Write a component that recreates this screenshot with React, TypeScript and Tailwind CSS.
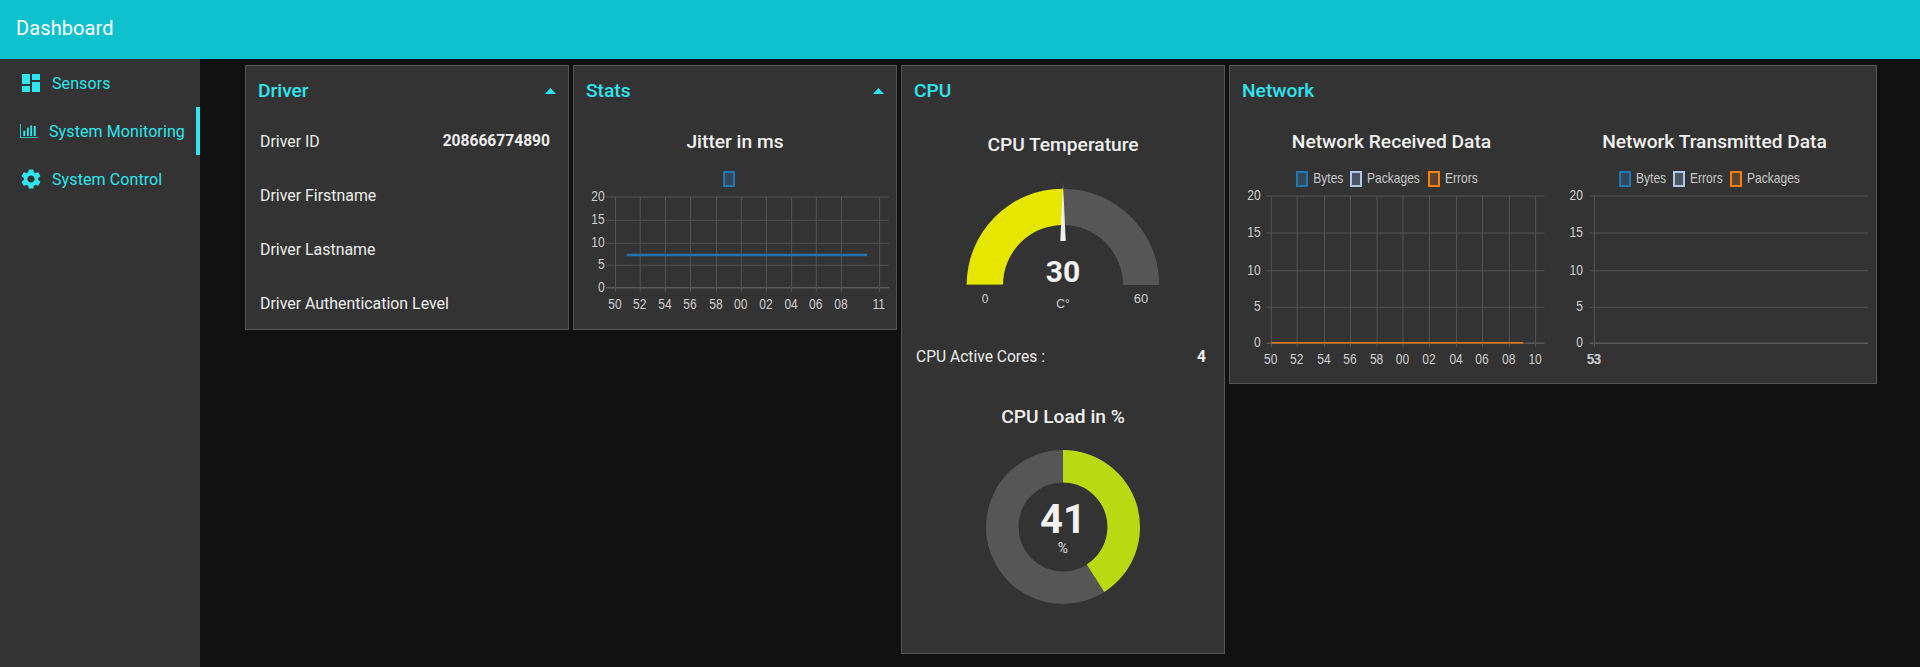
import React from 'react';
import { MdDashboard, MdSettings } from 'react-icons/md';

const tickFont = '"Liberation Sans", Arial, sans-serif';

interface LegendItem {
  x: number;
  label: string;
  labelX: number;
  color: string;
  fill: string;
}

interface LineChartProps {
  height: number;
  yTicks: { label: string; y: number }[];
  labelRight: number;
  gridLeft: number;
  gridRight: number;
  vLines: number[];
  xTicks: { label: string; x: number }[];
  xLabelY: number;
  legend: LegendItem[];
  line?: { x1: number; x2: number; y: number; color: string; width: number };
}

function Tick({ x, y, anchor, children }: { x: number; y: number; anchor: 'middle' | 'end'; children: string }) {
  return (
    <text
      transform={`translate(${x} ${y}) scale(0.86 1)`}
      textAnchor={anchor}
      fontSize={14}
      fill="#cfcfcf"
      fontFamily={tickFont}
    >
      {children}
    </text>
  );
}

function LineChart({ height, yTicks, labelRight, gridLeft, gridRight, vLines, xTicks, xLabelY, legend, line }: LineChartProps) {
  const top = yTicks[0].y;
  const bottom = yTicks[yTicks.length - 1].y;
  return (
    <svg width={322} height={height} className="block">
      {yTicks.map((t, i) => (
        <line
          key={t.label}
          x1={gridLeft}
          x2={gridRight}
          y1={t.y}
          y2={t.y}
          stroke={i === yTicks.length - 1 ? '#5a5a5a' : '#4a4a4a'}
          strokeWidth={i === yTicks.length - 1 ? 1.6 : 1.3}
        />
      ))}
      {vLines.map(x => (
        <line key={x} x1={x} x2={x} y1={top} y2={bottom + 4} stroke="#545454" strokeWidth={1} />
      ))}
      {yTicks.map(t => (
        <Tick key={t.label} x={labelRight} y={t.y + 4} anchor="end">
          {t.label}
        </Tick>
      ))}
      {xTicks.map(t => (
        <Tick key={t.label + t.x} x={t.x} y={xLabelY} anchor="middle">
          {t.label}
        </Tick>
      ))}
      {legend.map(l => (
        <g key={l.label || 'series'}>
          <rect x={Math.round(l.x) + 1} y={2} width={10} height={14} fill={l.fill} stroke={l.color} strokeWidth={2} />
          {l.label && (
            <text
              transform={`translate(${l.labelX} 12.5) scale(0.86 1)`}
              fontSize={14}
              fill="#c8c8c8"
              fontFamily={tickFont}
            >
              {l.label}
            </text>
          )}
        </g>
      ))}
      {line && <line x1={line.x1} x2={line.x2} y1={line.y} y2={line.y} stroke={line.color} strokeWidth={line.width} />}
    </svg>
  );
}

function BarsIcon() {
  return (
    <svg width={18} height={14} viewBox="0 0 18 14" fill="#2fe5ef" className="shrink-0">
      <rect x={0} y={0} width={0.8} height={14} />
      <rect x={0} y={13.2} width={18} height={0.8} />
      <rect x={3.3} y={6.7} width={2} height={5.3} />
      <rect x={7} y={3.7} width={1.8} height={8.3} />
      <rect x={10.3} y={1.5} width={1.8} height={10.5} />
      <rect x={13.7} y={2} width={2} height={10} />
    </svg>
  );
}

function Caret() {
  return (
    <svg width={11} height={6} viewBox="0 0 11 6" fill="#2fe5ef">
      <path d="M0 6 5.5 0 11 6z" />
    </svg>
  );
}

function CardTitle({ title, collapsible }: { title: string; collapsible?: boolean }) {
  return (
    <div className="h-[48px] pt-[2px] pl-3 pr-[12px] flex items-center justify-between">
      <span className="text-[19.2px] font-medium text-[#2fe5ef]">{title}</span>
      {collapsible && <Caret />}
    </div>
  );
}

function Gauge() {
  const cx = 161;
  const by = 111;
  const R = 96.3;
  const r = 60;
  return (
    <svg width={322} height={156} className="block">
      <defs>
        <linearGradient id="needle" x1="0" x2="0" y1="0" y2="1">
          <stop offset="0" stopColor="#ffffff" stopOpacity="0.15" />
          <stop offset="0.25" stopColor="#ffffff" stopOpacity="0.8" />
          <stop offset="1" stopColor="#f4f4f4" />
        </linearGradient>
      </defs>
      <path
        d={`M${cx - R} ${by} A${R} ${R} 0 0 1 ${cx + R} ${by} L${cx + r} ${by} A${r} ${r} 0 0 0 ${cx - r} ${by} Z`}
        fill="#565656"
      />
      <path d={`M${cx - R} ${by} A${R} ${R} 0 0 1 ${cx} ${by - R} L${cx} ${by - r} A${r} ${r} 0 0 0 ${cx - r} ${by} Z`} fill="#e6e600" />
      <line x1={cx - R} x2={cx - r} y1={by - 0.5} y2={by - 0.5} stroke="#a3a310" strokeWidth={1} />
      <path d={`M${cx} ${by - 103.5} L${cx + 2.7} ${by - 44} L${cx - 2.7} ${by - 44} Z`} fill="url(#needle)" />
      <text x={cx} y={by - 3} textAnchor="middle" fontSize={30} fontWeight={700} fill="#f2f2f2" fontFamily="Roboto, sans-serif">
        30
      </text>
      <text x={83} y={129} textAnchor="middle" fontSize={12} fill="#cfcfcf" fontFamily={tickFont}>
        0
      </text>
      <text x={239} y={129} textAnchor="middle" fontSize={13} fill="#cfcfcf" fontFamily={tickFont}>
        60
      </text>
      <text x={cx} y={133.5} textAnchor="middle" fontSize={12} fill="#cfcfcf" fontFamily={tickFont}>
        C°
      </text>
    </svg>
  );
}

function Donut() {
  const cx = 161;
  const cy = 79;
  const R = 77;
  const r = 44.5;
  const a = (0.41 * 2 * Math.PI);
  const sx = Math.sin(a);
  const cy2 = -Math.cos(a);
  return (
    <svg width={322} height={162} className="block">
      <circle cx={cx} cy={cy} r={(R + r) / 2} fill="none" stroke="#565656" strokeWidth={R - r} />
      <path
        d={`M${cx} ${cy - R} A${R} ${R} 0 0 1 ${cx + R * sx} ${cy + R * cy2} L${cx + r * sx} ${cy + r * cy2} A${r} ${r} 0 0 0 ${cx} ${cy - r} Z`}
        fill="#b9d913"
      />
      <text x={cx} y={cy + 6} textAnchor="middle" fontSize={40} fontWeight={700} fill="#f2f2f2" fontFamily="Roboto, sans-serif">
        41
      </text>
      <text x={cx} y={cy + 26} textAnchor="middle" fontSize={14} fill="#dcdcdc" fontFamily="Roboto, sans-serif">
        %
      </text>
    </svg>
  );
}

const navItems = [
  { label: 'Sensors', icon: <MdDashboard size={24} className="shrink-0" />, cls: 'pl-[19px] gap-[9px]' },
  { label: 'System Monitoring', icon: <BarsIcon />, cls: 'pl-5 gap-[11px] border-r-4 border-[#2fe5ef]' },
  { label: 'System Control', icon: <MdSettings size={24} className="shrink-0" />, cls: 'pl-[19px] gap-[9px]' },
];

const driverRows = [
  { label: 'Driver ID', value: '208666774890' },
  { label: 'Driver Firstname', value: '' },
  { label: 'Driver Lastname', value: '' },
  { label: 'Driver Authentication Level', value: '' },
];

const seconds = ['50', '52', '54', '56', '58', '00', '02', '04', '06', '08'];

const jitterX = [41.5, 66.2, 91.4, 116.5, 142.5, 167.3, 192.4, 217.6, 242.3, 267.4, 305.6];
const netX = [41.3, 67.2, 94.5, 120.4, 147.1, 173, 199.4, 226.6, 252.5, 279.3, 305.6];
const netY = [
  { label: '20', y: 26 },
  { label: '15', y: 63 },
  { label: '10', y: 100.7 },
  { label: '5', y: 137.3 },
  { label: '0', y: 173.3 },
];

export default function App() {
  return (
    <div className="h-screen flex flex-col bg-[#111111] overflow-hidden" style={{ fontFamily: 'Roboto, sans-serif' }}>
      <header className="h-[59px] shrink-0 bg-[#0fc1cd] flex items-center pl-[16px] pb-[3px] text-white text-[20px] tracking-[0.1px]">
        Dashboard
      </header>
      <div className="flex flex-1 min-h-0">
        <nav className="w-[200px] shrink-0 bg-[#333333]">
          {navItems.map(item => (
            <div key={item.label} className={`h-[48px] flex items-center text-[16px] tracking-[0.1px] text-[#2fe5ef] ${item.cls}`}>
              {item.icon}
              <span className="mt-[2px]">{item.label}</span>
            </div>
          ))}
        </nav>

        <main className="flex-1 pl-[45px] pt-[6px] flex items-start gap-[4px]">
          <section className="w-[324px] h-[265px] border border-[#555555] bg-[#333333]">
            <CardTitle title="Driver" collapsible />
            {driverRows.map(row => (
              <div key={row.label} className="h-[54px] pt-[2px] pl-[14px] pr-[18px] flex items-center justify-between text-[15.9px] text-[#ececec]">
                <span>{row.label}</span>
                {row.value && <span className="font-bold text-[15.6px]">{row.value}</span>}
              </div>
            ))}
          </section>

          <section className="w-[324px] h-[265px] border border-[#555555] bg-[#333333]">
            <CardTitle title="Stats" collapsible />
            <div className="h-[56px] flex items-center justify-center text-[19.2px] font-medium text-[#f0f0f0]">Jitter in ms</div>
            <LineChart
              height={155}
              yTicks={[
                { label: '20', y: 27 },
                { label: '15', y: 50.3 },
                { label: '10', y: 73.3 },
                { label: '5', y: 95.3 },
                { label: '0', y: 117.7 },
              ]}
              labelRight={30.7}
              gridLeft={32}
              gridRight={315}
              vLines={jitterX}
              xTicks={[...seconds.map((label, i) => ({ label, x: jitterX[i] - 0.5 })), { label: '11', x: 304.7 }]}
              xLabelY={139.3}
              legend={[{ x: 148.6, label: '', labelX: 0, color: '#1f77b4', fill: '#33475a' }]}
              line={{ x1: 52.8, x2: 293, y: 85, color: '#2272ab', width: 2.5 }}
            />
          </section>

          <section className="w-[324px] h-[589px] border border-[#555555] bg-[#333333]">
            <CardTitle title="CPU" />
            <div className="h-[60px] pt-[2px] flex items-center justify-center text-[19.2px] font-medium text-[#f0f0f0]">CPU Temperature</div>
            <Gauge />
            <div className="h-[54px] pt-[2px] pl-[14px] pr-[18px] flex items-center justify-between text-[15.6px] text-[#ececec]">
              <span>CPU Active Cores :</span>
              <span className="font-bold">4</span>
            </div>
            <div className="h-[64px] pt-[2px] flex items-center justify-center text-[19.2px] font-medium text-[#f0f0f0]">CPU Load in %</div>
            <Donut />
          </section>

          <section className="w-[648px] h-[319px] border border-[#555555] bg-[#333333]">
            <CardTitle title="Network" />
            <div className="grid grid-cols-2">
              <div>
                <div className="h-[56px] flex items-center justify-center text-[19.2px] font-medium text-[#f0f0f0]">Network Received Data</div>
                <LineChart
                  height={206}
                  yTicks={netY}
                  labelRight={30.7}
                  gridLeft={36.4}
                  gridRight={314.5}
                  vLines={netX}
                  xTicks={[...seconds, '10'].map((label, i) => ({ label, x: netX[i] - 0.5 }))}
                  xLabelY={194.3}
                  legend={[
                    { x: 65.7, label: 'Bytes', labelX: 83.3, color: '#1f77b4', fill: '#33475a' },
                    { x: 120, label: 'Packages', labelX: 137, color: '#aec7e8', fill: '#4b5563' },
                    { x: 198, label: 'Errors', labelX: 215, color: '#ff7f0e', fill: '#5a4530' },
                  ]}
                  line={{ x1: 41.3, x2: 293, y: 172.7, color: '#e8740f', width: 1.5 }}
                />
              </div>
              <div>
                <div className="h-[56px] flex items-center justify-center text-[19.2px] font-medium text-[#f0f0f0]">Network Transmitted Data</div>
                <LineChart
                  height={206}
                  yTicks={netY}
                  labelRight={30}
                  gridLeft={36.5}
                  gridRight={315}
                  vLines={[41.4]}
                  xTicks={[{ label: '53', x: 40.5 }, { label: '53', x: 41.5 }]}
                  xLabelY={194.3}
                  legend={[
                    { x: 65.5, label: 'Bytes', labelX: 83, color: '#1f77b4', fill: '#33475a' },
                    { x: 119.6, label: 'Errors', labelX: 137, color: '#aec7e8', fill: '#4b5563' },
                    { x: 176.7, label: 'Packages', labelX: 194, color: '#ff7f0e', fill: '#5a4530' },
                  ]}
                />
              </div>
            </div>
          </section>
        </main>
      </div>
    </div>
  );
}
